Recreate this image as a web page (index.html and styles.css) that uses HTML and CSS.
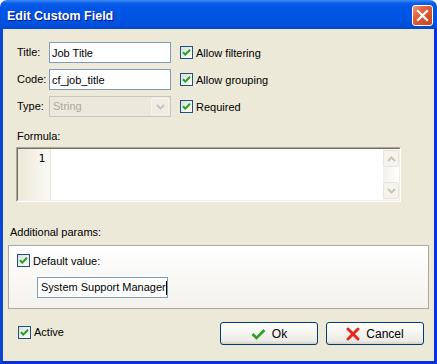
FILE: index.html
```html
<!DOCTYPE html>
<html lang="en">
<head>
  <meta charset="UTF-8" />
  <title>Edit Custom Field</title>
  <link rel="stylesheet" href="styles.css">
</head>
<body>
  <div class="window">
    <div class="titlebar">
      <span class="title">Edit Custom Field</span>
      <button class="close">
        <svg width="13" height="13" viewBox="0 0 13 13"><path d="M2 2 L11 11 M11 2 L2 11" stroke="#fff" stroke-width="2.2" stroke-linecap="square"/></svg>
      </button>
    </div>

    <div class="client">
      <div class="fields">
        <span class="label">Title:</span>
        <input class="text" type="text" value="Job Title">
        <label class="check"><span class="box"><svg width="11" height="11" viewBox="0 0 11 11"><path d="M2 5.2 L4.3 7.6 L9 2.8" fill="none" stroke="#21a121" stroke-width="2"/></svg></span>Allow filtering</label>

        <span class="label">Code:</span>
        <input class="text" type="text" value="cf_job_title">
        <label class="check"><span class="box"><svg width="11" height="11" viewBox="0 0 11 11"><path d="M2 5.2 L4.3 7.6 L9 2.8" fill="none" stroke="#21a121" stroke-width="2"/></svg></span>Allow grouping</label>

        <span class="label">Type:</span>
        <div class="select disabled">
          <span class="select-value">String</span>
          <span class="select-btn"><svg width="9" height="6" viewBox="0 0 9 6"><path d="M1 1 L4.5 4.5 L8 1" fill="none" stroke="#c9c7ba" stroke-width="2"/></svg></span>
        </div>
        <label class="check"><span class="box"><svg width="11" height="11" viewBox="0 0 11 11"><path d="M2 5.2 L4.3 7.6 L9 2.8" fill="none" stroke="#21a121" stroke-width="2"/></svg></span>Required</label>
      </div>

      <div class="caption formula-caption">Formula:</div>
      <div class="editor">
        <div class="editor-inner">
          <div class="gutter">1</div>
          <div class="code"></div>
          <div class="vscroll">
            <span class="sbtn"><svg width="9" height="6" viewBox="0 0 9 6"><path d="M1 5 L4.5 1.5 L8 5" fill="none" stroke="#c9c7ba" stroke-width="2"/></svg></span>
            <span class="track"></span>
            <span class="sbtn"><svg width="9" height="6" viewBox="0 0 9 6"><path d="M1 1 L4.5 4.5 L8 1" fill="none" stroke="#c9c7ba" stroke-width="2"/></svg></span>
          </div>
        </div>
      </div>

      <div class="caption params-caption">Additional params:</div>
      <div class="group">
        <label class="check"><span class="box"><svg width="11" height="11" viewBox="0 0 11 11"><path d="M2 5.2 L4.3 7.6 L9 2.8" fill="none" stroke="#21a121" stroke-width="2"/></svg></span>Default value:</label>
        <div class="textbox">System Support Manager<span class="caret"></span></div>
      </div>

      <div class="footer">
        <label class="check"><span class="box"><svg width="11" height="11" viewBox="0 0 11 11"><path d="M2 5.2 L4.3 7.6 L9 2.8" fill="none" stroke="#21a121" stroke-width="2"/></svg></span>Active</label>
        <div class="buttons">
          <button class="btn">
            <svg width="15" height="12" viewBox="0 0 15 12"><path d="M1.5 6 L5.5 10 L13.5 2" fill="none" stroke="#2aa12a" stroke-width="2.6"/></svg>
            Ok
          </button>
          <button class="btn">
            <svg width="14" height="14" viewBox="0 0 14 14"><path d="M2 2 L12 12 M12 2 L2 12" stroke="#e8281c" stroke-width="3" stroke-linecap="round"/></svg>
            Cancel
          </button>
        </div>
      </div>
    </div>
  </div>
</body>
</html>
```

FILE: styles.css
```css
body {
  margin: 0;
  background: #fff;
  font-family: 'Liberation Sans', Arial, sans-serif;
  font-size: 11px;
  color: #000;
}

.window {
  width: 437px;
  height: 364px;
  display: flex;
  flex-direction: column;
}

.titlebar {
  height: 29px;
  flex-shrink: 0;
  display: flex;
  align-items: center;
  justify-content: space-between;
  padding: 0 4px 0 7px;
  border-radius: 7px 7px 0 0;
  background: linear-gradient(#3c8cf6 0%, #0a5ce8 12%, #0055e5 30%, #0053e0 75%, #0049d2 100%);
  box-sizing: border-box;
}

.title {
  color: #fff;
  font-weight: bold;
  font-size: 12.5px;
  text-shadow: 1px 1px 0 #0a1883;
  padding-top: 2px;
}

.close {
  width: 21px;
  height: 21px;
  padding: 0;
  border: 1px solid #fff;
  border-radius: 3px;
  background: linear-gradient(135deg, #f09a7c 0%, #e2613b 35%, #c9421a 100%);
  display: flex;
  align-items: center;
  justify-content: center;
  margin-top: 2px;
}

.client {
  flex: 1;
  background: #ece9d8;
  border: 3px solid #0054e3;
  border-top: none;
  border-color: #0847d8 #0831d9 #0831d9 #0847d8;
  display: flex;
  flex-direction: column;
}

.fields {
  display: grid;
  grid-template-columns: 32px 122px auto;
  grid-auto-rows: 21px;
  row-gap: 6px;
  margin: 13px 0 0 14px;
  align-items: center;
}

.label {
  line-height: 21px;
}

.text {
  height: 21px;
  box-sizing: border-box;
  border: 1px solid #7f9db9;
  padding: 0 2px;
  font: inherit;
  color: #000;
  background: #fff;
  outline: none;
}

.select {
  height: 21px;
  box-sizing: border-box;
  border: 1px solid #c9c7ba;
  background: #ebe9db;
  display: flex;
  align-items: stretch;
}

.select-value {
  flex: 1;
  color: #aca899;
  padding-left: 3px;
  line-height: 19px;
}

.select-btn {
  width: 16px;
  margin: 1px;
  border: 1px solid #f6f5ee;
  background: #efede3;
  border-radius: 1px;
  display: flex;
  align-items: center;
  justify-content: center;
}

.check {
  display: flex;
  align-items: center;
  gap: 3px;
}

.fields .check {
  margin-left: 9px;
}

.box {
  width: 11px;
  height: 11px;
  border: 1px solid #1c5180;
  background: linear-gradient(135deg, #dcdcd7, #fff);
  display: flex;
}

.caption {
  line-height: 13px;
  height: 13px;
}

.formula-caption {
  margin: 13px 0 0 14px;
}

.editor {
  margin: 4px 0 0 13px;
  width: 385px;
  height: 55px;
  box-sizing: border-box;
  border: 1px solid;
  border-color: #aca899 #fff #fff #aca899;
}

.editor-inner {
  height: 100%;
  box-sizing: border-box;
  border: 1px solid;
  border-color: #716f64 #f1efe2 #f1efe2 #716f64;
  display: flex;
  background: #fff;
}

.gutter {
  width: 33px;
  box-sizing: border-box;
  border-right: 1px solid #e4e2d6;
  background: linear-gradient(to right, #ece9d8, #faf9f5);
  text-align: right;
  padding: 3px 5px 0 0;
  font-family: 'DejaVu Sans Mono', monospace;
  font-size: 11px;
}

.code {
  flex: 1;
}

.vscroll {
  width: 16px;
  display: flex;
  flex-direction: column;
  background: linear-gradient(to right, #f3f1ec, #fefefb);
}

.sbtn {
  height: 15px;
  margin: 1px 0;
  border: 1px solid #e8e6dc;
  border-radius: 2px;
  background: #f4f3ee;
  display: flex;
  align-items: center;
  justify-content: center;
}

.track {
  flex: 1;
}

.params-caption {
  margin: 24px 0 0 7px;
}

.group {
  margin: 6px 0 0 5px;
  width: 421px;
  height: 64px;
  box-sizing: border-box;
  border: 1px solid #a9a9a4;
  background: linear-gradient(#fff, #f3f2ec);
  padding: 8px 0 0 8px;
}

.textbox {
  margin: 10px 0 0 20px;
  width: 131px;
  height: 21px;
  box-sizing: border-box;
  border: 1px solid #7f9db9;
  background: #fff;
  padding-left: 3px;
  line-height: 19px;
  display: flex;
  align-items: center;
}

.caret {
  width: 1px;
  height: 14px;
  background: #000;
}

.footer {
  margin: 13px 10px 0 15px;
  display: flex;
  align-items: center;
  justify-content: space-between;
}

.footer .check {
  margin-top: -3px;
}

.buttons {
  display: flex;
  gap: 8px;
}

.btn {
  width: 98px;
  height: 23px;
  border: 1px solid #003c74;
  border-radius: 3px;
  background: linear-gradient(#fff 0%, #f4f3ee 50%, #ecebe4 85%, #d6d0c5 100%);
  font: inherit;
  font-size: 12px;
  color: #000;
  display: flex;
  align-items: center;
  justify-content: center;
  gap: 6px;
  padding: 0;
}
```
